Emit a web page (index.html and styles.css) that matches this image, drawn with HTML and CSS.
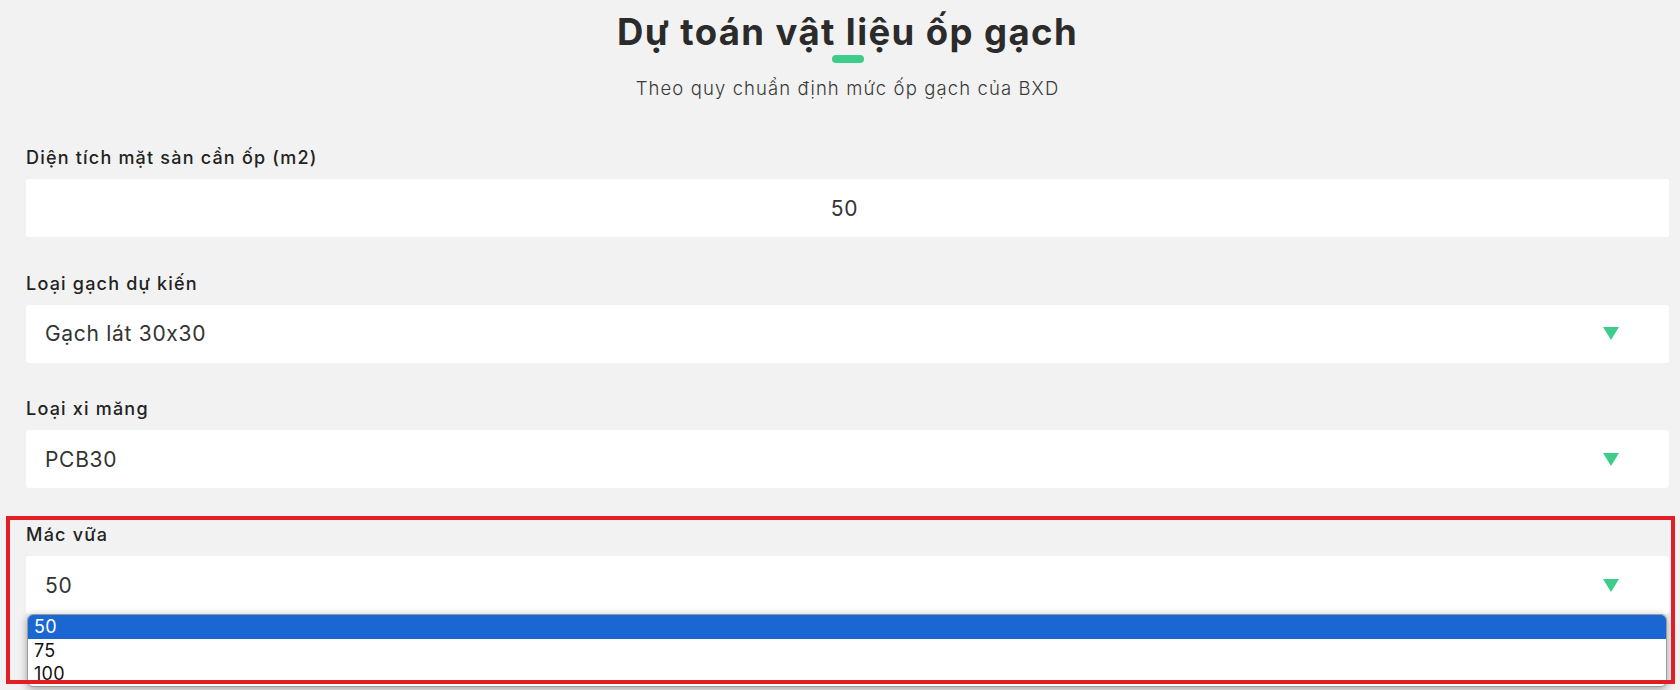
FILE: index.html
```html
<!DOCTYPE html>
<html lang="vi">
<head>
<meta charset="utf-8">
<title>Dự toán vật liệu ốp gạch</title>
<link rel="stylesheet" href="styles.css">
</head>
<body>
<main class="page">
  <header class="head">
    <h1 class="title">Dự toán vật liệu ốp gạch</h1>
    <span class="title-bar"></span>
    <p class="subtitle">Theo quy chuẩn định mức ốp gạch của BXD</p>
  </header>

  <form class="calc">
    <div class="field">
      <label class="field-label">Diện tích mặt sàn cần ốp (m2)</label>
      <div class="control control-input">50</div>
    </div>

    <div class="field">
      <label class="field-label">Loại gạch dự kiến</label>
      <div class="control control-select">
        <span class="control-value">Gạch lát 30x30</span>
        <svg class="arrow" width="16" height="13" viewBox="0 0 16 13"><polygon points="0,0 16,0 8,13"/></svg>
      </div>
    </div>

    <div class="field">
      <label class="field-label">Loại xi măng</label>
      <div class="control control-select">
        <span class="control-value">PCB30</span>
        <svg class="arrow" width="16" height="13" viewBox="0 0 16 13"><polygon points="0,0 16,0 8,13"/></svg>
      </div>
    </div>

    <div class="field field-open">
      <label class="field-label">Mác vữa</label>
      <div class="control control-select">
        <span class="control-value">50</span>
        <svg class="arrow" width="16" height="13" viewBox="0 0 16 13"><polygon points="0,0 16,0 8,13"/></svg>
      </div>
      <ul class="dropdown">
        <li class="option option-selected">50</li>
        <li class="option">75</li>
        <li class="option">100</li>
      </ul>
      <div class="highlight"></div>
    </div>
  </form>
</main>
</body>
</html>
```

FILE: styles.css
```css
* {
  box-sizing: border-box;
}

html, body {
  margin: 0;
  padding: 0;
}

body {
  background: #f2f2f2;
  font-family: "Inter", "Noto Sans", sans-serif;
  font-feature-settings: "calt" 0;
  color: #222;
  overflow: hidden;
  height: 690px;
}

.page {
  padding: 0 11px 0 26px;
}

.head {
  display: flex;
  flex-direction: column;
  align-items: center;
  padding-top: 10px;
}

.title {
  margin: 0;
  font-size: 36.5px;
  line-height: 44px;
  font-weight: 700;
  letter-spacing: 1.4px;
  color: #2b2b2b;
}

.title-bar {
  display: block;
  width: 32px;
  height: 8px;
  margin-top: 1px;
  border-radius: 4px;
  background: #3dcd8b;
}

.subtitle {
  margin: 14px 0 0;
  font-size: 18.5px;
  line-height: 22px;
  font-weight: 300;
  letter-spacing: 1.1px;
  color: #3a3a3a;
}

.calc {
  display: flex;
  flex-direction: column;
  gap: 35.7px;
  margin-top: 48px;
}

.field {
  display: flex;
  flex-direction: column;
  gap: 11px;
}

.field-label {
  font-size: 18px;
  line-height: 21px;
  font-weight: 500;
  letter-spacing: 1.2px;
  color: #222;
}

.control {
  height: 58px;
  background: #fff;
  border-radius: 3px;
  font-size: 21px;
  letter-spacing: 0.7px;
  color: #333;
  display: flex;
  align-items: center;
}

.control-input {
  justify-content: center;
  padding: 0 25px 0 19px;
}

.control-select {
  justify-content: space-between;
  padding: 0 50px 0 19px;
}

.arrow {
  display: block;
  fill: #3dcd8b;
}

.field-open {
  position: relative;
}

.dropdown {
  position: absolute;
  top: 100%;
  left: 1px;
  right: 2px;
  margin: 0;
  padding: 0;
  list-style: none;
  background: #fff;
  border: 1px solid #9a9a9a;
  border-radius: 6px;
  overflow: hidden;
  box-shadow: 0 2px 8px rgba(0, 0, 0, 0.35);
  z-index: 2;
}

.option {
  height: 23.5px;
  line-height: 23px;
  padding-left: 6px;
  font-size: 18px;
  letter-spacing: 0.3px;
  color: #111;
}

.option-selected {
  background: #1a66d2;
  color: #fff;
}

.highlight {
  position: absolute;
  top: -8px;
  left: -20px;
  right: -6px;
  height: 168px;
  border: 4.5px solid #e21d26;
  z-index: 3;
  pointer-events: none;
}
```
